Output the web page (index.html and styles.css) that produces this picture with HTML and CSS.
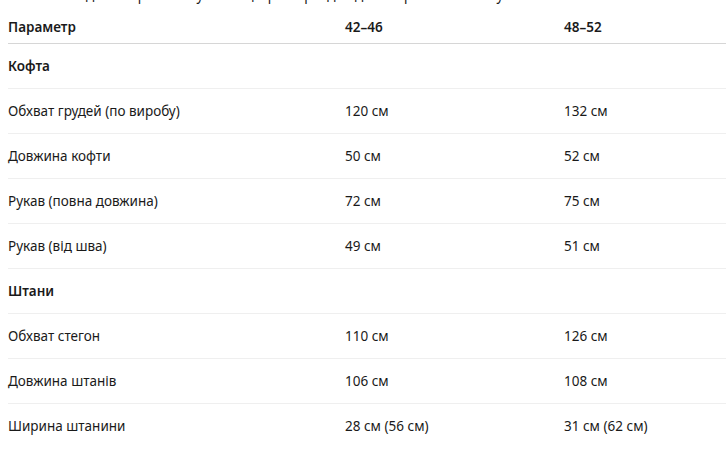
FILE: index.html
```html
<!DOCTYPE html>
<html lang="uk">
<head>
<meta charset="utf-8">
<link rel="stylesheet" href="styles.css">
</head>
<body>
<p class="intro">Нижче наведено порівняльну таблицю розмірів для двох варіантів пошиву.</p>
<table class="sizes">
  <colgroup>
    <col class="c1"><col class="c2"><col class="c3">
  </colgroup>
  <thead>
    <tr><th>Параметр</th><th>42–46</th><th>48–52</th></tr>
  </thead>
  <tbody>
    <tr class="group"><td>Кофта</td><td></td><td></td></tr>
    <tr><td>Обхват грудей (по виробу)</td><td>120 см</td><td>132 см</td></tr>
    <tr><td>Довжина кофти</td><td>50 см</td><td>52 см</td></tr>
    <tr><td>Рукав (повна довжина)</td><td>72 см</td><td>75 см</td></tr>
    <tr><td>Рукав (від шва)</td><td>49 см</td><td>51 см</td></tr>
    <tr class="group"><td>Штани</td><td></td><td></td></tr>
    <tr><td>Обхват стегон</td><td>110 см</td><td>126 см</td></tr>
    <tr><td>Довжина штанів</td><td>106 см</td><td>108 см</td></tr>
    <tr class="last"><td>Ширина штанини</td><td>28 см (56 см)</td><td>31 см (62 см)</td></tr>
  </tbody>
</table>
</body>
</html>
```
FILE: styles.css
```css
html, body {
  margin: 0;
  padding: 0;
  background: #fff;
  overflow: hidden;
}
body {
  padding: 0 0 0 8px;
  font-family: "Noto Sans", "Open Sans", sans-serif;
  font-size: 13.5px;
  color: #1a1a1a;
}
.intro {
  margin: -15px 0 0;
  line-height: 20px;
  height: 20px;
  white-space: nowrap;
}
.sizes {
  border-collapse: collapse;
  width: 760px;
  table-layout: fixed;
}
.c1 { width: 337px; }
.c2 { width: 219px; }
.c3 { width: 204px; }
.sizes th,
.sizes td {
  text-align: left;
  padding: 12px 0;
  line-height: 20px;
  vertical-align: middle;
}
.sizes th {
  font-weight: 600;
  padding: 12px 0 6px;
  border-bottom: 1px solid #d6d6d6;
}
.sizes td {
  border-bottom: 1px solid #efefef;
}
.sizes tr.last td { border-bottom: none; }
.sizes tr.group td {
  font-weight: 600;
}
```
